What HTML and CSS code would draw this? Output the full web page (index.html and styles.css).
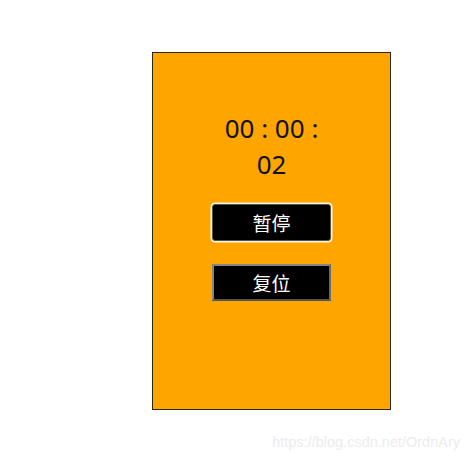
FILE: index.html
```html
<!DOCTYPE html>
<html>
<head>
<meta charset="utf-8">
<link rel="stylesheet" href="styles.css">
</head>
<body>
<div class="page">
  <div class="panel">
    <div class="time">00 : 00 : 02</div>
    <button class="btn btn-focus">暂停</button>
    <button class="btn btn-plain">复位</button>
  </div>
  <div class="mark">https://blog.csdn.net/OrdnAry</div>
</div>
</body>
</html>
```

FILE: styles.css
```css
html, body {
  margin: 0;
  padding: 0;
  background: #ffffff;
}
.page {
  width: 476px;
  height: 460px;
  display: flex;
  flex-direction: column;
  font-family: "Noto Sans", "Noto Sans CJK SC", sans-serif;
}
.panel {
  margin: 52px 0 0 152px;
  width: 237px;
  height: 299px;
  background: #ffa500;
  border: 1px solid #2e2410;
  display: flex;
  flex-direction: column;
  align-items: center;
  padding-top: 57px;
  box-sizing: content-box;
}
.time {
  width: 100px;
  text-align: center;
  font-size: 26px;
  line-height: 36px;
  color: #111;
  margin-bottom: 22px;
}
.btn {
  width: 119px;
  height: 37px;
  background: #000;
  color: #fff;
  font-family: "Noto Sans CJK SC", sans-serif;
  font-size: 19px;
  line-height: 20px;
  padding: 0;
  box-sizing: border-box;
}
.btn-focus {
  border: 1px solid #555;
  border-radius: 3px;
  box-shadow: 0 0 0 1.5px #fff6dc;
  margin-bottom: 23px;
}
.btn-plain {
  border: 2px solid;
  border-color: #858585 #6a6a6a #555 #858585;
}
.mark {
  margin-top: 24px;
  align-self: flex-end;
  margin-right: 16px;
  font-family: "Liberation Sans", sans-serif;
  font-size: 14.5px;
  color: #ececec;
}
```
